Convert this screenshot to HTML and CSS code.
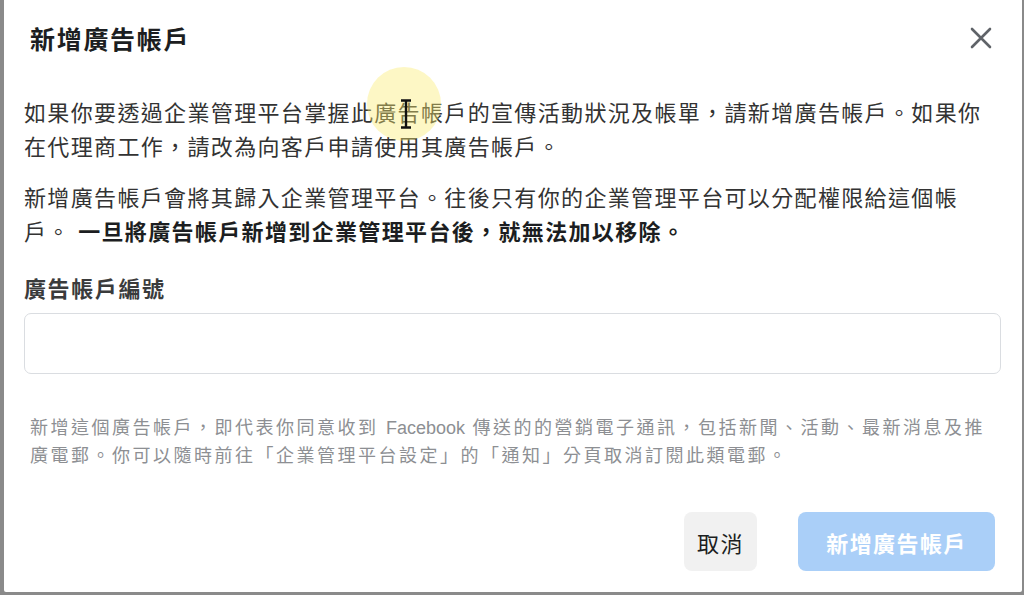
FILE: index.html
```html
<!DOCTYPE html>
<html lang="zh-Hant">
<head>
  <meta charset="UTF-8" />
  <meta name="viewport" content="width=device-width, initial-scale=1" />
  <title>新增廣告帳戶</title>
  <link rel="stylesheet" href="styles.css">
</head>

<body>
  <div class="dialog">
    <header class="dialog-header">
      <h1 class="dialog-title">新增廣告帳戶</h1>
      <div class="close-btn" role="button" aria-label="關閉">
        <svg width="22" height="22" viewBox="0 0 22 22">
          <path d="M2 2 L20 20 M20 2 L2 20" stroke="#5f6368" stroke-width="2.6" stroke-linecap="round" fill="none" />
        </svg>
      </div>
    </header>

    <div class="dialog-body">
      <p class="text">如果你要透過企業管理平台掌握此廣告帳戶的宣傳活動狀況及帳單，請新增廣告帳戶。如果你<br>在代理商工作，請改為向客戶申請使用其廣告帳戶。</p>
      <p class="text">新增廣告帳戶會將其歸入企業管理平台。往後只有你的企業管理平台可以分配權限給這個帳<br>戶。 <strong>一旦將廣告帳戶新增到企業管理平台後，就無法加以移除。</strong></p>

      <label class="field-label" for="adAccountId">廣告帳戶編號</label>
      <input class="field-input" id="adAccountId" type="text" />

      <p class="note">新增這個廣告帳戶，即代表你同意收到 <span class="latin">Facebook</span> 傳送的的營銷電子通訊，包括新聞、活動、最新消息及推<br>廣電郵。你可以隨時前往「企業管理平台設定」的「通知」分頁取消訂閱此類電郵。</p>
    </div>

    <footer class="dialog-footer">
      <button class="btn btn-cancel">取消</button>
      <button class="btn btn-primary" disabled>新增廣告帳戶</button>
    </footer>

    <!-- screen recorder cursor highlight -->
    <div class="cursor-spot"></div>
    <svg class="cursor-beam" width="12" height="30" viewBox="0 0 12 30">
      <path d="M1 1.5 H11 M6 1.5 V28.5 M1 28.5 H11" stroke="#111" stroke-width="2.4" fill="none" />
    </svg>
  </div>
</body>
</html>
```

FILE: styles.css
```css
* {
  margin: 0;
  padding: 0;
  box-sizing: border-box;
}

body {
  font-family: 'Liberation Sans', 'Noto Sans CJK TC', sans-serif;
  background-color: #8a8a8a;
  width: 1024px;
  height: 595px;
  overflow: hidden;
}

.dialog {
  position: relative;
  width: 1018px;
  height: 592px;
  margin-left: 4px;
  background-color: #fff;
  border-radius: 0 0 2px 2px;
  display: flex;
  flex-direction: column;
}

.dialog-header {
  height: 76px;
  padding: 0 26px;
  display: flex;
  align-items: center;
  justify-content: space-between;
}

.dialog-title {
  font-size: 25px;
  font-weight: 700;
  letter-spacing: 1.7px;
  color: #1c1e21;
}

.close-btn {
  width: 22px;
  height: 22px;
  margin-right: 4px;
  display: flex;
  cursor: pointer;
}

.dialog-body {
  padding: 21px 21px 0 20px;
  display: flex;
  flex-direction: column;
}

.text {
  font-size: 22px;
  line-height: 34px;
  letter-spacing: 1.35px;
  color: #333;
  white-space: nowrap;
}

.text + .text {
  margin-top: 17px;
}

.text strong {
  font-weight: 700;
  color: #1c1e21;
}

.field-label {
  margin-top: 25px;
  font-size: 22px;
  line-height: 30px;
  font-weight: 700;
  letter-spacing: 1.6px;
  color: #3a3b3c;
}

.field-input {
  margin-top: 8px;
  height: 61px;
  width: 100%;
  border: 1px solid #dadde1;
  border-radius: 7px;
  background-color: #fff;
  outline: none;
}

.note {
  margin-top: 40px;
  padding-left: 6px;
  font-size: 18px;
  line-height: 28px;
  letter-spacing: 2.5px;
  color: #8d8f93;
  white-space: nowrap;
}

.note .latin {
  letter-spacing: 0;
}

.dialog-footer {
  margin-top: 42px;
  padding-right: 27px;
  display: flex;
  justify-content: flex-end;
  gap: 41px;
}

.btn {
  height: 59px;
  border: none;
  border-radius: 8px;
  font-family: 'Liberation Sans', 'Noto Sans CJK TC', sans-serif;
  font-size: 22px;
  letter-spacing: 1.4px;
  cursor: pointer;
}

.btn-cancel {
  width: 73px;
  background-color: #f1f1f1;
  color: #1c1e21;
}

.btn-primary {
  width: 197px;
  background-color: #aacff8;
  color: #fff;
  font-weight: 700;
}

/* cursor overlay from the recording */
.cursor-spot {
  position: absolute;
  left: 363px;
  top: 67px;
  width: 74px;
  height: 74px;
  border-radius: 50%;
  background-color: rgba(250, 236, 110, 0.4);
  pointer-events: none;
}

.cursor-beam {
  position: absolute;
  left: 396px;
  top: 99px;
  pointer-events: none;
}
```
